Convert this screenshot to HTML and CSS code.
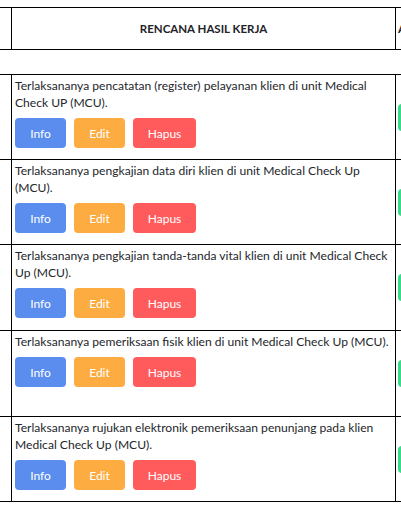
FILE: index.html
```html
<!DOCTYPE html>
<html lang="id">
<head>
<meta charset="utf-8">
<title>Rencana Hasil Kerja</title>
<link rel="stylesheet" href="styles.css">
</head>
<body>
<div class="page">
  <div class="thead">
    <div class="row head-row">
      <div class="cell c0"></div>
      <div class="cell c1 head-title">RENCANA HASIL KERJA</div>
      <div class="cell c2 head-title">AKSI</div>
    </div>
  </div>
  <div class="tbody">
    <div class="row">
      <div class="cell c0"></div>
      <div class="cell c1 body-cell">
        <p class="desc">Terlaksananya pencatatan (register) pelayanan klien di unit Medical<br>Check UP (MCU).</p>
        <div class="actions"><button class="btn btn-info">Info</button><button class="btn btn-edit">Edit</button><button class="btn btn-del">Hapus</button></div>
      </div>
      <div class="cell c2 action-cell"><button class="btn btn-ok">Pilih</button></div>
    </div>
    <div class="row">
      <div class="cell c0"></div>
      <div class="cell c1 body-cell">
        <p class="desc">Terlaksananya pengkajian data diri klien di unit Medical Check Up<br>(MCU).</p>
        <div class="actions"><button class="btn btn-info">Info</button><button class="btn btn-edit">Edit</button><button class="btn btn-del">Hapus</button></div>
      </div>
      <div class="cell c2 action-cell"><button class="btn btn-ok">Pilih</button></div>
    </div>
    <div class="row tall">
      <div class="cell c0"></div>
      <div class="cell c1 body-cell">
        <p class="desc">Terlaksananya pengkajian tanda-tanda vital klien di unit Medical Check<br>Up (MCU).</p>
        <div class="actions"><button class="btn btn-info">Info</button><button class="btn btn-edit">Edit</button><button class="btn btn-del">Hapus</button></div>
      </div>
      <div class="cell c2 action-cell"><button class="btn btn-ok">Pilih</button></div>
    </div>
    <div class="row tall">
      <div class="cell c0"></div>
      <div class="cell c1 body-cell">
        <p class="desc">Terlaksananya pemeriksaan fisik klien di unit Medical Check Up (MCU).</p>
        <div class="actions"><button class="btn btn-info">Info</button><button class="btn btn-edit">Edit</button><button class="btn btn-del">Hapus</button></div>
      </div>
      <div class="cell c2 action-cell"><button class="btn btn-ok">Pilih</button></div>
    </div>
    <div class="row last">
      <div class="cell c0"></div>
      <div class="cell c1 body-cell">
        <p class="desc">Terlaksananya rujukan elektronik pemeriksaan penunjang pada klien<br>Medical Check Up (MCU).</p>
        <div class="actions"><button class="btn btn-info">Info</button><button class="btn btn-edit">Edit</button><button class="btn btn-del">Hapus</button></div>
      </div>
      <div class="cell c2 action-cell"><button class="btn btn-ok">Pilih</button></div>
    </div>
  </div>
</div>
</body>
</html>
```

FILE: styles.css
```css
html, body {
  margin: 0;
  padding: 0;
  background: #fff;
  overflow: hidden;
}
body {
  font-family: "Lato", "Open Sans", sans-serif;
  color: #23262b;
}
.page {
  width: 560px;
  padding-top: 7px;
}
.row {
  display: grid;
  grid-template-columns: 12px 384px 160px;
  border-top: 1px solid #000;
}
.row.last, .head-row {
  border-bottom: 1px solid #000;
}
.cell {
  box-sizing: border-box;
}
.c0, .c1 {
  border-right: 1px solid #000;
}
.thead {
  margin-bottom: 24px;
}
.head-row {
  height: 43px;
  box-sizing: border-box;
}
.head-title {
  display: flex;
  align-items: center;
  font-weight: 700;
  font-size: 11.5px;
  color: #1f2228;
  white-space: nowrap;
}
.c1.head-title {
  justify-content: center;
}
.c2.head-title {
  padding-left: 2px;
}
.body-cell {
  padding: 2px 1px 11px 3px;
  min-height: 84px;
}
.row.tall .body-cell {
  min-height: 85px;
}
.desc {
  margin: 0;
  font-size: 12.1px;
  line-height: 17px;
  white-space: nowrap;
}
.actions {
  display: flex;
  gap: 8px;
  margin-top: 7px;
}
.btn {
  border: none;
  border-radius: 4px;
  height: 30px;
  padding: 0;
  color: #fff;
  font-family: "Lato", "Open Sans", sans-serif;
  font-size: 12px;
}
.btn-info { width: 51px; background: #5a8dee; }
.btn-edit { width: 51px; background: #fdac41; }
.btn-del { width: 63px; background: #ff5b5c; }
.action-cell {
  display: flex;
  align-items: center;
  padding-left: 2px;
}
.btn-ok {
  width: 60px;
  height: 27px;
  background: #39da8a;
}
```
